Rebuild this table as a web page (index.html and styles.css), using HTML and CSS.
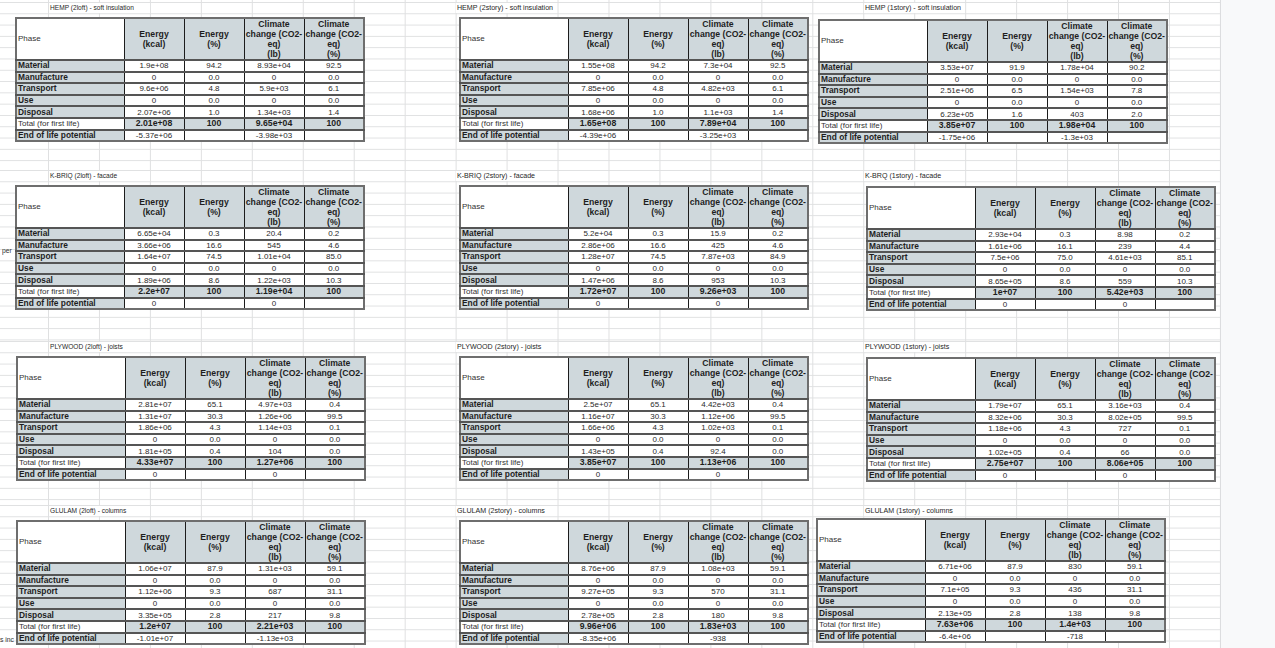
FILE: index.html
```html
<!DOCTYPE html>
<html lang="en">
<head>
<meta charset="utf-8">
<title>LCA tables</title>
<link rel="stylesheet" href="styles.css">
</head>
<body>
<div class="sheet">

  <!-- Band 1: HEMP -->
  <section class="band b1">
    <div class="cell c1">
      <div class="title">HEMP (2loft) - soft insulation</div>
      <table class="data">
        <colgroup><col class="cp"><col><col><col><col></colgroup>
        <thead><tr><th class="ph">Phase</th><th>Energy<br>(kcal)</th><th>Energy<br>(%)</th><th>Climate<br>change (CO2-<br>eq)<br>(lb)</th><th>Climate<br>change (CO2-<br>eq)<br>(%)</th></tr></thead>
        <tbody>
          <tr><td class="lbl">Material</td><td>1.9e+08</td><td>94.2</td><td>8.93e+04</td><td>92.5</td></tr>
          <tr><td class="lbl">Manufacture</td><td>0</td><td>0.0</td><td>0</td><td>0.0</td></tr>
          <tr><td class="lbl">Transport</td><td>9.6e+06</td><td>4.8</td><td>5.9e+03</td><td>6.1</td></tr>
          <tr><td class="lbl">Use</td><td>0</td><td>0.0</td><td>0</td><td>0.0</td></tr>
          <tr><td class="lbl">Disposal</td><td>2.07e+06</td><td>1.0</td><td>1.34e+03</td><td>1.4</td></tr>
          <tr class="tot"><td class="lbl">Total (for first life)</td><td>2.01e+08</td><td>100</td><td>9.65e+04</td><td>100</td></tr>
          <tr><td class="lbl">End of life potential</td><td>-5.37e+06</td><td></td><td>-3.98e+03</td><td></td></tr>
        </tbody>
      </table>
    </div>
    <div class="cell c2">
      <div class="title">HEMP (2story) - soft insulation</div>
      <table class="data">
        <colgroup><col class="cp"><col><col><col><col></colgroup>
        <thead><tr><th class="ph">Phase</th><th>Energy<br>(kcal)</th><th>Energy<br>(%)</th><th>Climate<br>change (CO2-<br>eq)<br>(lb)</th><th>Climate<br>change (CO2-<br>eq)<br>(%)</th></tr></thead>
        <tbody>
          <tr><td class="lbl">Material</td><td>1.55e+08</td><td>94.2</td><td>7.3e+04</td><td>92.5</td></tr>
          <tr><td class="lbl">Manufacture</td><td>0</td><td>0.0</td><td>0</td><td>0.0</td></tr>
          <tr><td class="lbl">Transport</td><td>7.85e+06</td><td>4.8</td><td>4.82e+03</td><td>6.1</td></tr>
          <tr><td class="lbl">Use</td><td>0</td><td>0.0</td><td>0</td><td>0.0</td></tr>
          <tr><td class="lbl">Disposal</td><td>1.68e+06</td><td>1.0</td><td>1.1e+03</td><td>1.4</td></tr>
          <tr class="tot"><td class="lbl">Total (for first life)</td><td>1.65e+08</td><td>100</td><td>7.89e+04</td><td>100</td></tr>
          <tr><td class="lbl">End of life potential</td><td>-4.39e+06</td><td></td><td>-3.25e+03</td><td></td></tr>
        </tbody>
      </table>
    </div>
    <div class="cell c3 down2">
      <div class="title">HEMP (1story) - soft insulation</div>
      <table class="data">
        <colgroup><col class="cp"><col><col><col><col></colgroup>
        <thead><tr><th class="ph">Phase</th><th>Energy<br>(kcal)</th><th>Energy<br>(%)</th><th>Climate<br>change (CO2-<br>eq)<br>(lb)</th><th>Climate<br>change (CO2-<br>eq)<br>(%)</th></tr></thead>
        <tbody>
          <tr><td class="lbl">Material</td><td>3.53e+07</td><td>91.9</td><td>1.78e+04</td><td>90.2</td></tr>
          <tr><td class="lbl">Manufacture</td><td>0</td><td>0.0</td><td>0</td><td>0.0</td></tr>
          <tr><td class="lbl">Transport</td><td>2.51e+06</td><td>6.5</td><td>1.54e+03</td><td>7.8</td></tr>
          <tr><td class="lbl">Use</td><td>0</td><td>0.0</td><td>0</td><td>0.0</td></tr>
          <tr><td class="lbl">Disposal</td><td>6.23e+05</td><td>1.6</td><td>403</td><td>2.0</td></tr>
          <tr class="tot"><td class="lbl">Total (for first life)</td><td>3.85e+07</td><td>100</td><td>1.98e+04</td><td>100</td></tr>
          <tr><td class="lbl">End of life potential</td><td>-1.75e+06</td><td></td><td>-1.3e+03</td><td></td></tr>
        </tbody>
      </table>
    </div>
  </section>

  <!-- Band 2: K-BRIQ -->
  <section class="band b2">
    <span class="cut cut-per">per</span>
    <div class="cell c1">
      <div class="title">K-BRIQ (2loft) - facade</div>
      <table class="data">
        <colgroup><col class="cp"><col><col><col><col></colgroup>
        <thead><tr><th class="ph">Phase</th><th>Energy<br>(kcal)</th><th>Energy<br>(%)</th><th>Climate<br>change (CO2-<br>eq)<br>(lb)</th><th>Climate<br>change (CO2-<br>eq)<br>(%)</th></tr></thead>
        <tbody>
          <tr><td class="lbl">Material</td><td>6.65e+04</td><td>0.3</td><td>20.4</td><td>0.2</td></tr>
          <tr><td class="lbl">Manufacture</td><td>3.66e+06</td><td>16.6</td><td>545</td><td>4.6</td></tr>
          <tr><td class="lbl">Transport</td><td>1.64e+07</td><td>74.5</td><td>1.01e+04</td><td>85.0</td></tr>
          <tr><td class="lbl">Use</td><td>0</td><td>0.0</td><td>0</td><td>0.0</td></tr>
          <tr><td class="lbl">Disposal</td><td>1.89e+06</td><td>8.6</td><td>1.22e+03</td><td>10.3</td></tr>
          <tr class="tot"><td class="lbl">Total (for first life)</td><td>2.2e+07</td><td>100</td><td>1.19e+04</td><td>100</td></tr>
          <tr><td class="lbl">End of life potential</td><td>0</td><td></td><td>0</td><td></td></tr>
        </tbody>
      </table>
    </div>
    <div class="cell c2">
      <div class="title">K-BRIQ (2story) - facade</div>
      <table class="data">
        <colgroup><col class="cp"><col><col><col><col></colgroup>
        <thead><tr><th class="ph">Phase</th><th>Energy<br>(kcal)</th><th>Energy<br>(%)</th><th>Climate<br>change (CO2-<br>eq)<br>(lb)</th><th>Climate<br>change (CO2-<br>eq)<br>(%)</th></tr></thead>
        <tbody>
          <tr><td class="lbl">Material</td><td>5.2e+04</td><td>0.3</td><td>15.9</td><td>0.2</td></tr>
          <tr><td class="lbl">Manufacture</td><td>2.86e+06</td><td>16.6</td><td>425</td><td>4.6</td></tr>
          <tr><td class="lbl">Transport</td><td>1.28e+07</td><td>74.5</td><td>7.87e+03</td><td>84.9</td></tr>
          <tr><td class="lbl">Use</td><td>0</td><td>0.0</td><td>0</td><td>0.0</td></tr>
          <tr><td class="lbl">Disposal</td><td>1.47e+06</td><td>8.6</td><td>953</td><td>10.3</td></tr>
          <tr class="tot"><td class="lbl">Total (for first life)</td><td>1.72e+07</td><td>100</td><td>9.26e+03</td><td>100</td></tr>
          <tr><td class="lbl">End of life potential</td><td>0</td><td></td><td>0</td><td></td></tr>
        </tbody>
      </table>
    </div>
    <div class="cell c3 far down1">
      <div class="title">K-BRQ (1story) - facade</div>
      <table class="data">
        <colgroup><col class="cp"><col><col><col><col></colgroup>
        <thead><tr><th class="ph">Phase</th><th>Energy<br>(kcal)</th><th>Energy<br>(%)</th><th>Climate<br>change (CO2-<br>eq)<br>(lb)</th><th>Climate<br>change (CO2-<br>eq)<br>(%)</th></tr></thead>
        <tbody>
          <tr><td class="lbl">Material</td><td>2.93e+04</td><td>0.3</td><td>8.98</td><td>0.2</td></tr>
          <tr><td class="lbl">Manufacture</td><td>1.61e+06</td><td>16.1</td><td>239</td><td>4.4</td></tr>
          <tr><td class="lbl">Transport</td><td>7.5e+06</td><td>75.0</td><td>4.61e+03</td><td>85.1</td></tr>
          <tr><td class="lbl">Use</td><td>0</td><td>0.0</td><td>0</td><td>0.0</td></tr>
          <tr><td class="lbl">Disposal</td><td>8.65e+05</td><td>8.6</td><td>559</td><td>10.3</td></tr>
          <tr class="tot"><td class="lbl">Total (for first life)</td><td>1e+07</td><td>100</td><td>5.42e+03</td><td>100</td></tr>
          <tr><td class="lbl">End of life potential</td><td>0</td><td></td><td>0</td><td></td></tr>
        </tbody>
      </table>
    </div>
  </section>

  <!-- Band 3: PLYWOOD -->
  <section class="band b3">
    <div class="cell c1 right1">
      <div class="title">PLYWOOD (2loft) - joists</div>
      <table class="data">
        <colgroup><col class="cp"><col><col><col><col></colgroup>
        <thead><tr><th class="ph">Phase</th><th>Energy<br>(kcal)</th><th>Energy<br>(%)</th><th>Climate<br>change (CO2-<br>eq)<br>(lb)</th><th>Climate<br>change (CO2-<br>eq)<br>(%)</th></tr></thead>
        <tbody>
          <tr><td class="lbl">Material</td><td>2.81e+07</td><td>65.1</td><td>4.97e+03</td><td>0.4</td></tr>
          <tr><td class="lbl">Manufacture</td><td>1.31e+07</td><td>30.3</td><td>1.26e+06</td><td>99.5</td></tr>
          <tr><td class="lbl">Transport</td><td>1.86e+06</td><td>4.3</td><td>1.14e+03</td><td>0.1</td></tr>
          <tr><td class="lbl">Use</td><td>0</td><td>0.0</td><td>0</td><td>0.0</td></tr>
          <tr><td class="lbl">Disposal</td><td>1.81e+05</td><td>0.4</td><td>104</td><td>0.0</td></tr>
          <tr class="tot"><td class="lbl">Total (for first life)</td><td>4.33e+07</td><td>100</td><td>1.27e+06</td><td>100</td></tr>
          <tr><td class="lbl">End of life potential</td><td>0</td><td></td><td>0</td><td></td></tr>
        </tbody>
      </table>
    </div>
    <div class="cell c2">
      <div class="title">PLYWOOD (2story) - joists</div>
      <table class="data">
        <colgroup><col class="cp"><col><col><col><col></colgroup>
        <thead><tr><th class="ph">Phase</th><th>Energy<br>(kcal)</th><th>Energy<br>(%)</th><th>Climate<br>change (CO2-<br>eq)<br>(lb)</th><th>Climate<br>change (CO2-<br>eq)<br>(%)</th></tr></thead>
        <tbody>
          <tr><td class="lbl">Material</td><td>2.5e+07</td><td>65.1</td><td>4.42e+03</td><td>0.4</td></tr>
          <tr><td class="lbl">Manufacture</td><td>1.16e+07</td><td>30.3</td><td>1.12e+06</td><td>99.5</td></tr>
          <tr><td class="lbl">Transport</td><td>1.66e+06</td><td>4.3</td><td>1.02e+03</td><td>0.1</td></tr>
          <tr><td class="lbl">Use</td><td>0</td><td>0.0</td><td>0</td><td>0.0</td></tr>
          <tr><td class="lbl">Disposal</td><td>1.43e+05</td><td>0.4</td><td>92.4</td><td>0.0</td></tr>
          <tr class="tot"><td class="lbl">Total (for first life)</td><td>3.85e+07</td><td>100</td><td>1.13e+06</td><td>100</td></tr>
          <tr><td class="lbl">End of life potential</td><td>0</td><td></td><td>0</td><td></td></tr>
        </tbody>
      </table>
    </div>
    <div class="cell c3 far down1">
      <div class="title">PLYWOOD (1story) - joists</div>
      <table class="data">
        <colgroup><col class="cp"><col><col><col><col></colgroup>
        <thead><tr><th class="ph">Phase</th><th>Energy<br>(kcal)</th><th>Energy<br>(%)</th><th>Climate<br>change (CO2-<br>eq)<br>(lb)</th><th>Climate<br>change (CO2-<br>eq)<br>(%)</th></tr></thead>
        <tbody>
          <tr><td class="lbl">Material</td><td>1.79e+07</td><td>65.1</td><td>3.16e+03</td><td>0.4</td></tr>
          <tr><td class="lbl">Manufacture</td><td>8.32e+06</td><td>30.3</td><td>8.02e+05</td><td>99.5</td></tr>
          <tr><td class="lbl">Transport</td><td>1.18e+06</td><td>4.3</td><td>727</td><td>0.1</td></tr>
          <tr><td class="lbl">Use</td><td>0</td><td>0.0</td><td>0</td><td>0.0</td></tr>
          <tr><td class="lbl">Disposal</td><td>1.02e+05</td><td>0.4</td><td>66</td><td>0.0</td></tr>
          <tr class="tot"><td class="lbl">Total (for first life)</td><td>2.75e+07</td><td>100</td><td>8.06e+05</td><td>100</td></tr>
          <tr><td class="lbl">End of life potential</td><td>0</td><td></td><td>0</td><td></td></tr>
        </tbody>
      </table>
    </div>
  </section>

  <!-- Band 4: GLULAM -->
  <section class="band b4">
    <span class="cut cut-inc">s inc</span>
    <div class="cell c1 right1">
      <div class="title">GLULAM (2loft) - columns</div>
      <table class="data">
        <colgroup><col class="cp"><col><col><col><col></colgroup>
        <thead><tr><th class="ph">Phase</th><th>Energy<br>(kcal)</th><th>Energy<br>(%)</th><th>Climate<br>change (CO2-<br>eq)<br>(lb)</th><th>Climate<br>change (CO2-<br>eq)<br>(%)</th></tr></thead>
        <tbody>
          <tr><td class="lbl">Material</td><td>1.06e+07</td><td>87.9</td><td>1.31e+03</td><td>59.1</td></tr>
          <tr><td class="lbl">Manufacture</td><td>0</td><td>0.0</td><td>0</td><td>0.0</td></tr>
          <tr><td class="lbl">Transport</td><td>1.12e+06</td><td>9.3</td><td>687</td><td>31.1</td></tr>
          <tr><td class="lbl">Use</td><td>0</td><td>0.0</td><td>0</td><td>0.0</td></tr>
          <tr><td class="lbl">Disposal</td><td>3.35e+05</td><td>2.8</td><td>217</td><td>9.8</td></tr>
          <tr class="tot"><td class="lbl">Total (for first life)</td><td>1.2e+07</td><td>100</td><td>2.21e+03</td><td>100</td></tr>
          <tr><td class="lbl">End of life potential</td><td>-1.01e+07</td><td></td><td>-1.13e+03</td><td></td></tr>
        </tbody>
      </table>
    </div>
    <div class="cell c2">
      <div class="title">GLULAM (2story) - columns</div>
      <table class="data">
        <colgroup><col class="cp"><col><col><col><col></colgroup>
        <thead><tr><th class="ph">Phase</th><th>Energy<br>(kcal)</th><th>Energy<br>(%)</th><th>Climate<br>change (CO2-<br>eq)<br>(lb)</th><th>Climate<br>change (CO2-<br>eq)<br>(%)</th></tr></thead>
        <tbody>
          <tr><td class="lbl">Material</td><td>8.76e+06</td><td>87.9</td><td>1.08e+03</td><td>59.1</td></tr>
          <tr><td class="lbl">Manufacture</td><td>0</td><td>0.0</td><td>0</td><td>0.0</td></tr>
          <tr><td class="lbl">Transport</td><td>9.27e+05</td><td>9.3</td><td>570</td><td>31.1</td></tr>
          <tr><td class="lbl">Use</td><td>0</td><td>0.0</td><td>0</td><td>0.0</td></tr>
          <tr><td class="lbl">Disposal</td><td>2.78e+05</td><td>2.8</td><td>180</td><td>9.8</td></tr>
          <tr class="tot"><td class="lbl">Total (for first life)</td><td>9.96e+06</td><td>100</td><td>1.83e+03</td><td>100</td></tr>
          <tr><td class="lbl">End of life potential</td><td>-8.35e+06</td><td></td><td>-938</td><td></td></tr>
        </tbody>
      </table>
    </div>
    <div class="cell c3 near up2">
      <div class="title">GLULAM (1story) - columns</div>
      <table class="data">
        <colgroup><col class="cp"><col><col><col><col></colgroup>
        <thead><tr><th class="ph">Phase</th><th>Energy<br>(kcal)</th><th>Energy<br>(%)</th><th>Climate<br>change (CO2-<br>eq)<br>(lb)</th><th>Climate<br>change (CO2-<br>eq)<br>(%)</th></tr></thead>
        <tbody>
          <tr><td class="lbl">Material</td><td>6.71e+06</td><td>87.9</td><td>830</td><td>59.1</td></tr>
          <tr><td class="lbl">Manufacture</td><td>0</td><td>0.0</td><td>0</td><td>0.0</td></tr>
          <tr><td class="lbl">Transport</td><td>7.1e+05</td><td>9.3</td><td>436</td><td>31.1</td></tr>
          <tr><td class="lbl">Use</td><td>0</td><td>0.0</td><td>0</td><td>0.0</td></tr>
          <tr><td class="lbl">Disposal</td><td>2.13e+05</td><td>2.8</td><td>138</td><td>9.8</td></tr>
          <tr class="tot"><td class="lbl">Total (for first life)</td><td>7.63e+06</td><td>100</td><td>1.4e+03</td><td>100</td></tr>
          <tr><td class="lbl">End of life potential</td><td>-6.4e+06</td><td></td><td>-718</td><td></td></tr>
        </tbody>
      </table>
    </div>
  </section>

</div>
</body>
</html>
```

FILE: styles.css
```css
* { box-sizing: border-box; }

html, body {
  margin: 0;
  padding: 0;
}

body {
  width: 1275px;
  height: 648px;
  overflow: hidden;
  background: #f8f9fa;
  font-family: "Liberation Sans", Arial, sans-serif;
  color: #222;
}

/* spreadsheet canvas with vertical gridlines */
.sheet {
  width: 1221px;
  height: 648px;
  padding-top: 2px;
  background-color: #fff;
  background-image: linear-gradient(to right, #dfe0e1 1px, transparent 1px);
  background-size: 50.96px 100%;
  background-position: 48px 0;
  border-right: 1px solid #dcdddf;
  display: grid;
  grid-template-rows: 168px 171px 164px 143px;
}

/* a horizontal strip of sheet rows holding three tables */
.band {
  position: relative;
  display: grid;
  grid-template-columns: 455px 361px 404px;
  align-items: start;
  background-image: linear-gradient(to bottom, #dfe0e1 1px, transparent 1px);
  background-size: 100% 11.3px;
}

.cell {
  display: flex;
  flex-direction: column;
  align-items: flex-start;
}

.title {
  margin-top: 1px;
  height: 10px;
  width: 101px;
  padding-left: 1px;
  background: #fff;
  font-size: 7.1px;
  line-height: 10px;
  white-space: nowrap;
  color: #1f1f1f;
}

.c1 .title { margin-left: 49px; font-size: 6.6px; }
.c2 .title { margin-left: 1px; }
.c3 .title { margin-left: 48px; }

.data { margin-top: 4px; }
.c1 .data { margin-left: 15px; }
.c1.right1 .data { margin-left: 16px; }
.c2 .data { margin-left: 4px; }
.c3 .data { margin-left: 2px; }
.c3.far .data { margin-left: 50px; }
.c3.near .data { margin-left: 0; }
.down1 .data { margin-top: 5px; }
.down2 .data { margin-top: 6px; }
.up2 .data { margin-top: 2px; }

/* clipped cell text peeking out from column A */
.cut {
  position: absolute;
  left: 1px;
  width: 14px;
  overflow: hidden;
  white-space: nowrap;
  font-size: 6.8px;
  line-height: 10px;
  color: #333;
}
.cut-per { top: 76px; left: 2px; }
.cut-inc { top: 130px; left: 0; }

/* LCA result table */
.data {
  width: 348px;
  border-collapse: collapse;
  table-layout: fixed;
  border: 2px solid #6e6e6e;
  background: #fff;
}

.data col { width: 60px; }
.data col.cp { width: 108px; }

.data th {
  height: 41px;
  padding: 0;
  border: 1px solid #1c1c1c;
  background: #cfd8dc;
  font-size: 8.7px;
  font-weight: bold;
  line-height: 10px;
  text-align: center;
  vertical-align: middle;
  color: #1e1e1e;
}

.data th.ph {
  background: #fff;
  font-weight: normal;
  font-size: 8px;
  text-align: left;
  padding-left: 1px;
  color: #333;
}

.data td {
  height: 11.6px;
  padding: 0;
  border: 1px solid #1c1c1c;
  border-top: 2px solid #555;
  font-size: 8px;
  line-height: 9px;
  text-align: center;
  vertical-align: middle;
  white-space: nowrap;
  color: #2a2a2a;
}

.data td.lbl {
  background: #cfd8dc;
  font-weight: bold;
  font-size: 8.4px;
  text-align: left;
  padding-left: 1px;
  color: #1e1e1e;
}

.data tr.tot td {
  background: #cfd8dc;
  font-weight: bold;
  font-size: 8.7px;
  color: #1e1e1e;
}

.data tr.tot td.lbl {
  background: #fff;
  font-weight: normal;
  font-size: 8px;
  color: #333;
}
```
